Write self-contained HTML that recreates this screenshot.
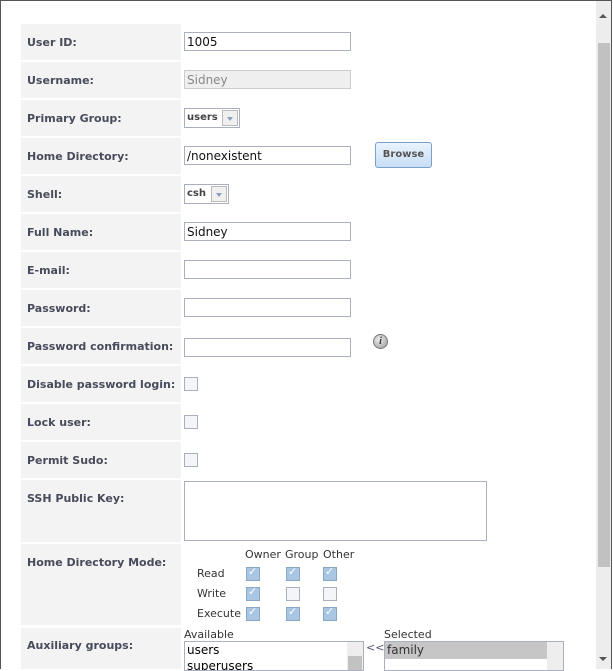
<!DOCTYPE html>
<html><head><style>
body{margin:0;width:613px;height:669px;overflow:hidden;background:#fff;font-family:"DejaVu Sans","Liberation Sans",sans-serif;position:relative}
.frame{position:absolute;left:0;top:0;width:612px;height:669px;border:1px solid #555;border-bottom:none;box-sizing:border-box}
.lab{position:absolute;left:21px;width:160px;background:#f3f3f3;font-size:11px;font-weight:bold;color:#474b5a;box-sizing:border-box;padding-left:6px}
.inp{position:absolute;left:184px;width:167px;height:19px;border:1px solid #aab0c0;box-sizing:border-box;font-size:12px;padding:2px 2px 0;color:#111;line-height:15px}
.cb{position:absolute;width:14px;height:14px;border:1px solid #aab0c0;box-sizing:border-box;background:#f4f5f8}
.ck{background:#a9c6e3;border-color:#8aa6c4}
.ck::after{content:"✓";position:absolute;left:1px;top:-3px;font-size:11px;color:#fff}
.sel{position:absolute;left:184px;height:20px;border:1px solid #aab0c0;box-sizing:border-box;font-size:10px;font-weight:bold;color:#444;padding:3px 2px}
.sel i{position:absolute;right:1px;top:1px;width:16px;height:16px;border:1px solid #bbb;box-sizing:border-box;background:#f0f0f0}
.sel i::after{content:"";position:absolute;left:4px;top:6px;border:3px solid transparent;border-top:4px solid #8aa0c0}
.t{position:absolute;font-size:11px;color:#333}
.l36{height:36px;line-height:38px}
</style></head><body>
<div class="frame"></div>

<div class="lab l36" style="top:24px">User ID:</div>
<div class="inp" style="top:32px">1005</div>
<div class="lab l36" style="top:62px">Username:</div>
<div class="inp" style="top:70px;background:#efefef;color:#888;border-color:#ccc">Sidney</div>
<div class="lab l36" style="top:100px">Primary Group:</div>
<div class="sel" style="top:108px;width:56px">users<i></i></div>
<div class="lab l36" style="top:138px">Home Directory:</div>
<div class="inp" style="top:146px">/nonexistent</div>
<div style="position:absolute;left:375px;top:142px;width:57px;height:26px;border:1px solid #7aa2cc;border-radius:3px;box-sizing:border-box;background:linear-gradient(#eaf3fd,#c8def5);font-size:10px;font-weight:bold;color:#555;text-align:center;line-height:24px">Browse</div>
<div class="lab l36" style="top:176px">Shell:</div>
<div class="sel" style="top:184px;width:45px">csh<i></i></div>
<div class="lab l36" style="top:214px">Full Name:</div>
<div class="inp" style="top:222px">Sidney</div>
<div class="lab l36" style="top:252px">E-mail:</div>
<div class="inp" style="top:260px"></div>
<div class="lab l36" style="top:290px">Password:</div>
<div class="inp" style="top:298px"></div>
<div class="lab l36" style="top:328px">Password confirmation:</div>
<div class="inp" style="top:338px"></div>
<div style="position:absolute;left:373px;top:334px;width:15px;height:15px;border-radius:50%;background:radial-gradient(circle at 40% 35%,#eee,#999);border:1px solid #777;box-sizing:border-box;font:italic bold 10px 'Liberation Serif',serif;color:#333;text-align:center;line-height:13px">i</div>
<div class="lab l36" style="top:366px">Disable password login:</div>
<div class="cb" style="left:184px;top:377px"></div>
<div class="lab l36" style="top:404px">Lock user:</div>
<div class="cb" style="left:184px;top:415px"></div>
<div class="lab l36" style="top:442px">Permit Sudo:</div>
<div class="cb" style="left:184px;top:453px"></div>
<div class="lab" style="top:480px;height:62px;padding-top:12px">SSH Public Key:</div>
<div style="position:absolute;left:184px;top:481px;width:303px;height:60px;border:1px solid #aab0c0;box-sizing:border-box"></div>
<div class="lab" style="top:544px;height:81px;padding-top:12px">Home Directory Mode:</div>
<div class="t" style="left:245px;top:548px">Owner</div><div class="t" style="left:285px;top:548px">Group</div><div class="t" style="left:323px;top:548px">Other</div>
<div class="t" style="left:197px;top:567px">Read</div><div class="t" style="left:197px;top:587px">Write</div><div class="t" style="left:197px;top:607px">Execute</div>
<div class="cb ck" style="left:246px;top:567px"></div><div class="cb ck" style="left:286px;top:567px"></div><div class="cb ck" style="left:323px;top:567px"></div>
<div class="cb ck" style="left:246px;top:587px"></div><div class="cb" style="left:286px;top:587px"></div><div class="cb" style="left:323px;top:587px"></div>
<div class="cb ck" style="left:246px;top:607px"></div><div class="cb ck" style="left:286px;top:607px"></div><div class="cb ck" style="left:323px;top:607px"></div>
<div class="lab" style="top:628px;height:41px;padding-top:11px">Auxiliary groups:</div>
<div class="t" style="left:184px;top:628px">Available</div>
<div class="t" style="left:384px;top:628px">Selected</div>
<div style="position:absolute;left:184px;top:641px;width:180px;height:30px;border:1px solid #aab0c0;box-sizing:border-box;font-size:12px;padding-left:2px;line-height:16px;overflow:hidden">users<br>superusers
<div style="position:absolute;right:0;top:0;width:16px;height:30px;background:#eee"><div style="position:absolute;top:14px;left:1px;width:14px;height:16px;background:#c2c2c2"></div></div></div>
<div class="t" style="left:366px;top:641px;color:#557">&lt;&lt;</div>
<div style="position:absolute;left:384px;top:641px;width:180px;height:30px;border:1px solid #aab0c0;box-sizing:border-box;font-size:12px;overflow:hidden">
<div style="background:#c6c6c6;height:17px;padding-left:2px;line-height:16px;color:#333;margin-right:16px">family</div>
<div style="position:absolute;right:0;top:0;width:16px;height:30px;background:#eee"></div></div>

<div style="position:absolute;left:596px;top:1px;width:15px;height:668px;background:#ededed">
<div style="position:absolute;left:3px;top:9px;border:4px solid transparent;border-bottom:4px solid #555"></div>
<div style="position:absolute;left:2px;top:42px;width:12px;height:524px;background:#c1c1c1"></div>
<div style="position:absolute;left:3px;top:656px;border:4px solid transparent;border-top:4px solid #555"></div>
</div>
</body></html>
